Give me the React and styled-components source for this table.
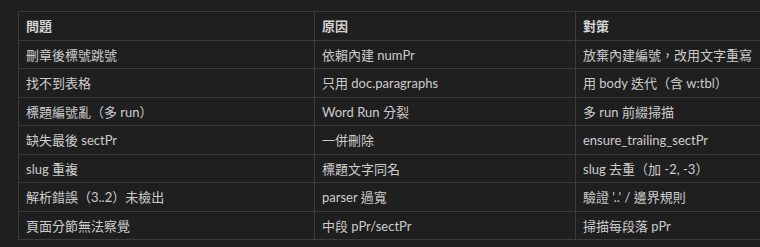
import React from "react";
import styled, { createGlobalStyle } from "styled-components";

const GlobalStyle = createGlobalStyle`
  html, body {
    margin: 0;
    padding: 0;
    background: #1f1f1f;
  }
  body {
    font-family: Lato, "Noto Sans CJK TC", sans-serif;
    color: #cccccc;
  }
`;

export const Page = styled.div`
  width: 760px;
  height: 247px;
  padding: 11px 0 0 18px;
  box-sizing: border-box;
  overflow: hidden;
  background: #1f1f1f;
`;

export const Table = styled.table`
  width: 752px;
  table-layout: fixed;
  border-collapse: collapse;
  font-size: 13px;
`;

export const Cell = styled.td`
  border: 1px solid #3b3b3b;
  padding: 4px 7px 2px;
  line-height: 21.5px;
  text-align: left;
  white-space: nowrap;
  font-weight: ${(p) => (p.$head ? 700 : 400)};
  color: ${(p) => (p.$head ? "#d4d4d4" : "#cccccc")};
`;

const rows = [
  ["刪章後標號跳號", "依賴內建 numPr", "放棄內建編號，改用文字重寫"],
  ["找不到表格", "只用 doc.paragraphs", "用 body 迭代（含 w:tbl）"],
  ["標題編號亂（多 run）", "Word Run 分裂", "多 run 前綴掃描"],
  ["缺失最後 sectPr", "一併刪除", "ensure_trailing_sectPr"],
  ["slug 重複", "標題文字同名", "slug 去重（加 -2, -3）"],
  ["解析錯誤（3..2）未檢出", "parser 過寬", "驗證 '..' / 邊界規則"],
  ["頁面分節無法察覺", "中段 pPr/sectPr", "掃描每段落 pPr"],
];

const App = () => {
  return (
    <Page>
      <GlobalStyle />
      <Table>
        <colgroup>
          <col style={{ width: 296 }} />
          <col style={{ width: 261 }} />
          <col />
        </colgroup>
        <thead>
          <tr>
            <Cell as="th" $head>問題</Cell>
            <Cell as="th" $head>原因</Cell>
            <Cell as="th" $head>對策</Cell>
          </tr>
        </thead>
        <tbody>
          {rows.map((r) => (
            <tr key={r[0]}>
              {r.map((c) => (
                <Cell key={c}>{c}</Cell>
              ))}
            </tr>
          ))}
        </tbody>
      </Table>
    </Page>
  );
};

export default App;
